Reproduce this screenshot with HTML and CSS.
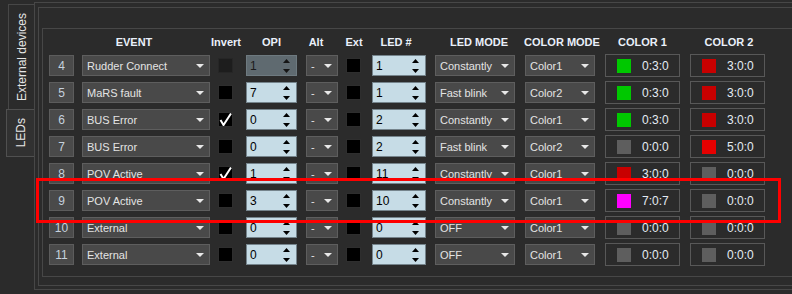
FILE: index.html
```html
<!DOCTYPE html>
<html lang="en">
<head>
  <meta charset="UTF-8">
  <title>LEDs</title>
  <link rel="stylesheet" href="styles.css">
</head>
<body>
  <div class="tabs">
    <div class="tab tab-ext"><span>External devices</span></div>
    <div class="tab tab-leds"><span>LEDs</span></div>
  </div>

  <div class="panel">
    <div class="frame">
      <div class="group">
        <div class="head">
          <span></span>
          <span class="hc h-event">EVENT</span>
          <span class="hc h-check">Invert</span>
          <span class="hc h-opi">OPI</span>
          <span class="hc h-alt">Alt</span>
          <span class="hc h-check">Ext</span>
          <span class="hc h-led">LED #</span>
          <span class="hc h-mode">LED MODE</span>
          <span class="hc h-cmode">COLOR MODE</span>
          <span class="hc h-color">COLOR 1</span>
          <span class="hc h-color2">COLOR 2</span>
        </div>
        <div id="rows" class="rows"></div>
      </div>
    </div>
  </div>

  <div class="highlight"></div>

  <script>
    // num, event, invert, opi, opi enabled, led, led mode, color mode, color1, color2
    const leds = [
      [4, 'Rudder Connect', 'dis', 1, false, 1, 'Constantly', 'Color1', ['green', '0:3:0'], ['red', '3:0:0']],
      [5, 'MaRS fault', 'off', 7, true, 1, 'Fast blink', 'Color2', ['green', '0:3:0'], ['red', '3:0:0']],
      [6, 'BUS Error', 'on', 0, true, 2, 'Constantly', 'Color1', ['green', '0:3:0'], ['red', '3:0:0']],
      [7, 'BUS Error', 'off', 0, true, 2, 'Fast blink', 'Color2', ['gray', '0:0:0'], ['red5', '5:0:0']],
      [8, 'POV Active', 'on', 1, true, 11, 'Constantly', 'Color1', ['red', '3:0:0'], ['gray', '0:0:0']],
      [9, 'POV Active', 'off', 3, true, 10, 'Constantly', 'Color1', ['magenta', '7:0:7'], ['gray', '0:0:0']],
      [10, 'External', 'off', 0, true, 0, 'OFF', 'Color1', ['gray', '0:0:0'], ['gray', '0:0:0']],
      [11, 'External', 'off', 0, true, 0, 'OFF', 'Color1', ['gray', '0:0:0'], ['gray', '0:0:0']]
    ];

    const tick = '<svg width="13" height="13" viewBox="0 0 13 13"><polyline points="1.5,7 4.5,12 12,0.5" fill="none" stroke="#fff" stroke-width="2"/></svg>';
    const arrows = '<svg width="7" height="14" viewBox="0 0 7 14"><polygon points="0,4 3.5,0 7,4" /><polygon points="0,10 7,10 3.5,14" /></svg>';

    function combo(cls, text) {
      return `<div class="combo ${cls}"><span>${text}</span></div>`;
    }
    function spin(cls, value, enabled) {
      return `<div class="spin ${cls}${enabled ? '' : ' dis'}"><span>${value}</span>${arrows}</div>`;
    }
    function color(c) {
      return `<div class="color"><i class="swatch sw-${c[0]}"></i><span>${c[1]}</span></div>`;
    }

    const rows = document.getElementById('rows');
    leds.forEach(r => {
      const inv = r[2] === 'dis' ? '<div class="check dis"></div>'
        : `<div class="check">${r[2] === 'on' ? tick : ''}</div>`;
      rows.innerHTML += `
        <div class="row">
          <div class="num">${r[0]}</div>
          ${combo('w-event', r[1])}
          ${inv}
          ${spin('w-opi', r[3], r[4])}
          ${combo('w-alt', '-')}
          <div class="check"></div>
          ${spin('w-led', r[5], true)}
          ${combo('w-mode', r[6])}
          ${combo('w-cmode', r[7])}
          ${color(r[8])}
          ${color(r[9])}
        </div>`;
    });
  </script>
</body>
</html>
```

FILE: styles.css
```css
body {
  margin: 0;
  height: 294px;
  overflow: hidden;
  display: flex;
  background: #2b2b2b;
  font-family: "Liberation Sans", Arial, sans-serif;
  color: #e2e2e2;
}

/* side tabs */
.tabs {
  width: 34px;
  padding-top: 4px;
  display: flex;
  flex-direction: column;
  align-items: flex-end;
}
.tab {
  box-sizing: border-box;
  display: flex;
  align-items: center;
  justify-content: center;
  font-size: 12px;
  color: #e6e6e6;
}
.tab span {
  writing-mode: vertical-rl;
  transform: rotate(180deg);
}
.tab-ext {
  width: 26px;
  height: 105px;
  border-left: 1px solid #474747;
  border-top: 1px solid #474747;
}
.tab-leds {
  width: 28px;
  height: 48px;
  border: 1px solid #505050;
  border-right: none;
  background: #313131;
}

/* nested frames */
.panel {
  flex: 1;
  box-sizing: border-box;
  height: 288px;
  margin-top: 2px;
  padding: 4px 0 0 3px;
  border: 1px solid #474747;
  border-right: none;
}
.frame {
  box-sizing: border-box;
  height: 279px;
  padding: 20px 0 0 3px;
  border: 1px solid #474747;
  border-right: none;
}
.group {
  box-sizing: border-box;
  height: 249px;
  padding-left: 6px;
  border: 1px solid #474747;
  border-right: none;
}

/* table */
.head,
.row {
  display: grid;
  grid-template-columns: 33px 136px 28px 60px 40px 26px 63px 90px 80px 85px 75px;
  align-items: center;
}
.head {
  height: 25px;
  font-size: 11px;
  font-weight: bold;
  color: #eaf0fa;
}
.hc {
  display: flex;
  justify-content: center;
  white-space: nowrap;
}
.h-event { width: 104px; }
.h-check { width: 16px; }
.h-opi { width: 51px; }
.h-alt { width: 20px; }
.h-led { width: 48px; }
.h-mode { width: 88px; }
.h-cmode { width: 74px; }
.h-color { width: 75px; }
.h-color2 { width: 78px; }

.rows {
  display: flex;
  flex-direction: column;
  gap: 6px;
}
.row {
  height: 21px;
}

.num {
  box-sizing: border-box;
  width: 25px;
  height: 21px;
  display: flex;
  align-items: center;
  justify-content: center;
  background: #4a4a4a;
  border: 1px solid #5c5c5c;
  font-size: 12px;
  color: #c6d2de;
}

.combo {
  box-sizing: border-box;
  height: 21px;
  display: flex;
  align-items: center;
  padding: 0 5px 0 4px;
  background: #494949;
  border: 1px solid #5e5e5e;
  font-size: 11px;
  color: #e4e4e4;
  white-space: nowrap;
}
.combo span {
  flex: 1;
}
.combo::after {
  content: "";
  border-left: 4px solid transparent;
  border-right: 4px solid transparent;
  border-top: 4px solid #e8e8e8;
}
.w-event { width: 128px; }
.w-alt { width: 32px; }
.w-mode { width: 80px; }
.w-cmode { width: 70px; }

.check {
  box-sizing: border-box;
  width: 15px;
  height: 15px;
  background: #000;
  border: 1px solid #2e2e2e;
}
.check.dis {
  background: #1d1d1d;
  border-color: #262626;
}
.check svg {
  display: block;
}

.spin {
  box-sizing: border-box;
  height: 21px;
  display: flex;
  align-items: center;
  padding: 0 6px 0 3px;
  background: #c6dce6;
  border: 1px solid #75848c;
  font-size: 12px;
  color: #000;
}
.spin span {
  flex: 1;
}
.spin svg {
  fill: #000;
}
.spin.dis {
  background: #5f6a70;
  border-color: #6e7a80;
  color: #1b1b1b;
}
.spin.dis svg {
  fill: #151515;
}
.w-opi { width: 51px; }
.w-led { width: 54px; }

.color {
  box-sizing: border-box;
  width: 75px;
  height: 23px;
  display: flex;
  align-items: center;
  gap: 11px;
  padding-left: 11px;
  border: 1px solid #585858;
  font-size: 12px;
  color: #e4ecf4;
}
.swatch {
  width: 14px;
  height: 14px;
}
.sw-green { background: #00c800; }
.sw-red { background: #c80000; }
.sw-red5 { background: #e60000; }
.sw-gray { background: #5e5e5e; }
.sw-magenta { background: #ff00ff; }

/* annotation box drawn over the 9th row */
.highlight {
  position: absolute;
  left: 36px;
  top: 178px;
  width: 745px;
  height: 45px;
  box-sizing: border-box;
  border: 3px solid #ff0000;
}
```
